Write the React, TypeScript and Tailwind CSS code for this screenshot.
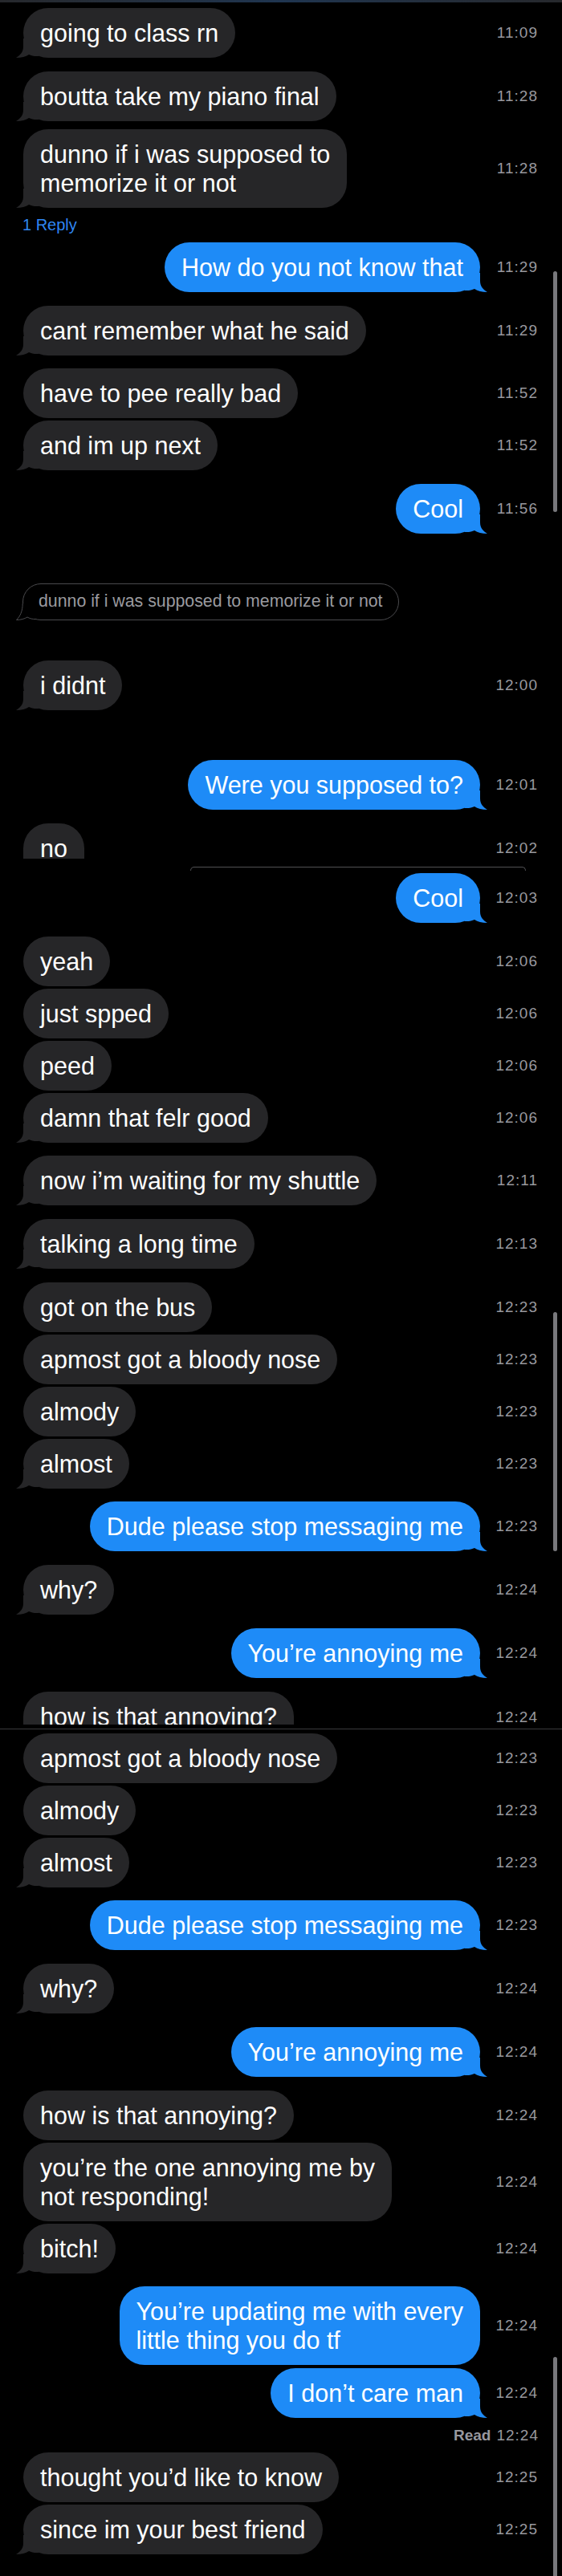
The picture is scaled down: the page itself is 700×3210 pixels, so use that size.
import React from 'react'

type Msg = { kind: 'in' | 'out'; lines: string[]; time: string; tail?: boolean; mt: string }
type Cut = { kind: 'cut'; text: string; time: string; h: string; pt: string; mt: string }
type Misc =
  | { kind: 'reply'; mt: string }
  | { kind: 'quote'; mt: string }
  | { kind: 'seam'; mt: string }
  | { kind: 'rule'; mt: string }
  | { kind: 'read'; time: string; mt: string }
type Item = Msg | Cut | Misc

const items: Item[] = [
  { kind: 'in', lines: ['going to class rn'], time: '11:09', tail: true, mt: 'mt-[7px]' },
  { kind: 'in', lines: ['boutta take my piano final'], time: '11:28', tail: true, mt: 'mt-[17px]' },
  { kind: 'in', lines: ['dunno if i was supposed to', 'memorize it or not'], time: '11:28', tail: true, mt: 'mt-[10px]' },
  { kind: 'reply', mt: 'mt-[10px]' },
  { kind: 'out', lines: ['How do you not know that'], time: '11:29', tail: true, mt: 'mt-[11px]' },
  { kind: 'in', lines: ['cant remember what he said'], time: '11:29', tail: true, mt: 'mt-[17px]' },
  { kind: 'in', lines: ['have to pee really bad'], time: '11:52', mt: 'mt-[16px]' },
  { kind: 'in', lines: ['and im up next'], time: '11:52', tail: true, mt: 'mt-[3px]' },
  { kind: 'out', lines: ['Cool'], time: '11:56', tail: true, mt: 'mt-[17px]' },
  { kind: 'quote', mt: 'mt-[62px]' },
  { kind: 'in', lines: ['i didnt'], time: '12:00', tail: true, mt: 'mt-[50px]' },
  { kind: 'out', lines: ['Were you supposed to?'], time: '12:01', tail: true, mt: 'mt-[62px]' },
  { kind: 'cut', text: 'no', time: '12:02', h: 'h-[44px]', pt: 'pt-[20px]', mt: 'mt-[17px]' },
  { kind: 'seam', mt: 'mt-[10px]' },
  { kind: 'out', lines: ['Cool'], time: '12:03', tail: true, mt: 'mt-[3px]' },
  { kind: 'in', lines: ['yeah'], time: '12:06', mt: 'mt-[17px]' },
  { kind: 'in', lines: ['just spped'], time: '12:06', mt: 'mt-[3px]' },
  { kind: 'in', lines: ['peed'], time: '12:06', mt: 'mt-[3px]' },
  { kind: 'in', lines: ['damn that felr good'], time: '12:06', tail: true, mt: 'mt-[3px]' },
  { kind: 'in', lines: ['now i’m waiting for my shuttle'], time: '12:11', tail: true, mt: 'mt-[16px]' },
  { kind: 'in', lines: ['talking a long time'], time: '12:13', tail: true, mt: 'mt-[17px]' },
  { kind: 'in', lines: ['got on the bus'], time: '12:23', mt: 'mt-[17px]' },
  { kind: 'in', lines: ['apmost got a bloody nose'], time: '12:23', mt: 'mt-[3px]' },
  { kind: 'in', lines: ['almody'], time: '12:23', mt: 'mt-[3px]' },
  { kind: 'in', lines: ['almost'], time: '12:23', tail: true, mt: 'mt-[3px]' },
  { kind: 'out', lines: ['Dude please stop messaging me'], time: '12:23', tail: true, mt: 'mt-[16px]' },
  { kind: 'in', lines: ['why?'], time: '12:24', tail: true, mt: 'mt-[17px]' },
  { kind: 'out', lines: ['You’re annoying me'], time: '12:24', tail: true, mt: 'mt-[17px]' },
  { kind: 'cut', text: 'how is that annoying?', time: '12:24', h: 'h-[41px]', pt: 'pt-[21px]', mt: 'mt-[17px]' },
  { kind: 'rule', mt: 'mt-[3px]' },
  { kind: 'in', lines: ['apmost got a bloody nose'], time: '12:23', mt: 'mt-[5px]' },
  { kind: 'in', lines: ['almody'], time: '12:23', mt: 'mt-[3px]' },
  { kind: 'in', lines: ['almost'], time: '12:23', tail: true, mt: 'mt-[3px]' },
  { kind: 'out', lines: ['Dude please stop messaging me'], time: '12:23', tail: true, mt: 'mt-[16px]' },
  { kind: 'in', lines: ['why?'], time: '12:24', tail: true, mt: 'mt-[17px]' },
  { kind: 'out', lines: ['You’re annoying me'], time: '12:24', tail: true, mt: 'mt-[17px]' },
  { kind: 'in', lines: ['how is that annoying?'], time: '12:24', mt: 'mt-[17px]' },
  { kind: 'in', lines: ['you’re the one annoying me by', 'not responding!'], time: '12:24', mt: 'mt-[3px]' },
  { kind: 'in', lines: ['bitch!'], time: '12:24', tail: true, mt: 'mt-[3px]' },
  { kind: 'out', lines: ['You’re updating me with every', 'little thing you do tf'], time: '12:24', mt: 'mt-[16px]' },
  { kind: 'out', lines: ['I don’t care man'], time: '12:24', tail: true, mt: 'mt-[4px]' },
  { kind: 'read', time: '12:24', mt: 'mt-[11px]' },
  { kind: 'in', lines: ['thought you’d like to know'], time: '12:25', mt: 'mt-[10px]' },
  { kind: 'in', lines: ['since im your best friend'], time: '12:25', tail: true, mt: 'mt-[3px]' },
]

const TAIL = 'M9 0 L9 10 C9 17 5 21 0 24 C7 24 12 22.5 16 20 C19 21.5 23 22.3 28 22 L28 0 Z'

const Tail = ({ out }: { out: boolean }) => (
  <svg
    width="28"
    height="24"
    viewBox="0 0 28 24"
    className={out ? 'absolute -right-[9px] bottom-0 -scale-x-100' : 'absolute -left-[9px] bottom-0'}
  >
    <path d={TAIL} fill={out ? '#1e8bf7' : '#262628'} />
  </svg>
)

const Time = ({ t, extra = '' }: { t: string; extra?: string }) => (
  <div className={`ml-[18px] w-[54px] shrink-0 text-right text-[19px] leading-[22px] tracking-[1px] text-[#98989e] ${extra}`}>
    {t}
  </div>
)

const Row = ({ m }: { m: Msg }) => {
  const out = m.kind === 'out'
  return (
    <div className={`flex items-center pl-[29px] pr-[30px] ${m.mt}`}>
      <div className={`flex min-w-0 flex-1 ${out ? 'justify-end' : 'justify-start'}`}>
        <div
          className={`relative whitespace-nowrap rounded-[31px] px-[21px] py-[13px] text-[30.5px] leading-[36px] text-white ${
            out ? 'bg-[#1e8bf7]' : 'bg-[#262628]'
          }`}
        >
          {m.lines.map((l) => (
            <div key={l}>{l}</div>
          ))}
          {m.tail && <Tail out={out} />}
        </div>
      </div>
      <Time t={m.time} />
    </div>
  )
}

// bubble sliced off where two screenshots were stitched together
const CutRow = ({ c }: { c: Cut }) => (
  <div className={`flex items-start pl-[29px] pr-[30px] ${c.mt}`}>
    <div className="flex min-w-0 flex-1">
      <div
        className={`w-fit overflow-hidden whitespace-nowrap rounded-t-[31px] bg-[#262628] px-[21px] pt-[13px] text-[30.5px] leading-[36px] text-white ${c.h}`}
      >
        {c.text}
      </div>
    </div>
    <Time t={c.time} extra={c.pt} />
  </div>
)

const Quote = ({ mt }: { mt: string }) => (
  <div className={`flex pl-[28px] ${mt}`}>
    <div className="relative flex h-[46px] w-fit items-center whitespace-nowrap rounded-[23px] border border-[#4a4a4d] pl-[19px] pr-[19px] text-[21.3px] text-[#9a9a9f]">
      dunno if i was supposed to memorize it or not
      <svg width="26" height="21" viewBox="0 0 26 21" className="absolute -bottom-px -left-[9px]">
        <path d="M8 0 C8 10 5 16 0 20.5 C6 20.5 11 19 14 17 C17 18.7 20 19.6 24 19.5 L24 0 Z" fill="#000" />
        <path
          d="M8.2 0 C8.2 10 5 16 0.5 20.5 C6 20.5 11 19 14 17 C17 18.7 20 19.6 24.5 19.6"
          fill="none"
          stroke="#4a4a4d"
          strokeWidth="1"
        />
      </svg>
    </div>
  </div>
)

export default function App() {
  return (
    <div className="relative min-h-[3210px] w-[700px] overflow-hidden bg-black font-['Liberation_Sans',Arial,sans-serif]">
      {/* status bar edge */}
      <div className="h-[3px] bg-linear-to-r from-[#26282c] via-[#1f3550] to-[#26282c]" />

      {items.map((it, i) => {
        switch (it.kind) {
          case 'in':
          case 'out':
            return <Row key={i} m={it} />
          case 'cut':
            return <CutRow key={i} c={it} />
          case 'reply':
            return (
              <div key={i} className={`pl-[28px] text-[20px] leading-[22px] text-[#2f86f2] ${it.mt}`}>
                1 Reply
              </div>
            )
          case 'quote':
            return <Quote key={i} mt={it.mt} />
          case 'seam':
            return (
              <div
                key={i}
                className={`ml-[237px] h-[5px] w-[418px] rounded-t-[12px] border-x border-t border-[#505053] ${it.mt}`}
              />
            )
          case 'rule':
            return <div key={i} className={`h-px w-full bg-[#3a3a3c] ${it.mt}`} />
          case 'read':
            return (
              <div key={i} className={`flex justify-end pr-[29px] text-[19px] leading-[22px] text-[#98989e] ${it.mt}`}>
                <span className="font-semibold">Read</span>
                <span className="ml-[7px] tracking-[1px]">{it.time}</span>
              </div>
            )
        }
      })}

      {/* scroll indicators from the stitched screenshots */}
      <div className="absolute left-[689px] top-[338px] h-[300px] w-[5px] rounded-full bg-[#78787c]" />
      <div className="absolute left-[689px] top-[1635px] h-[298px] w-[5px] rounded-full bg-[#78787c]" />
      <div className="absolute left-[689px] top-[2937px] h-[280px] w-[5px] rounded-full bg-[#78787c]" />
    </div>
  )
}
